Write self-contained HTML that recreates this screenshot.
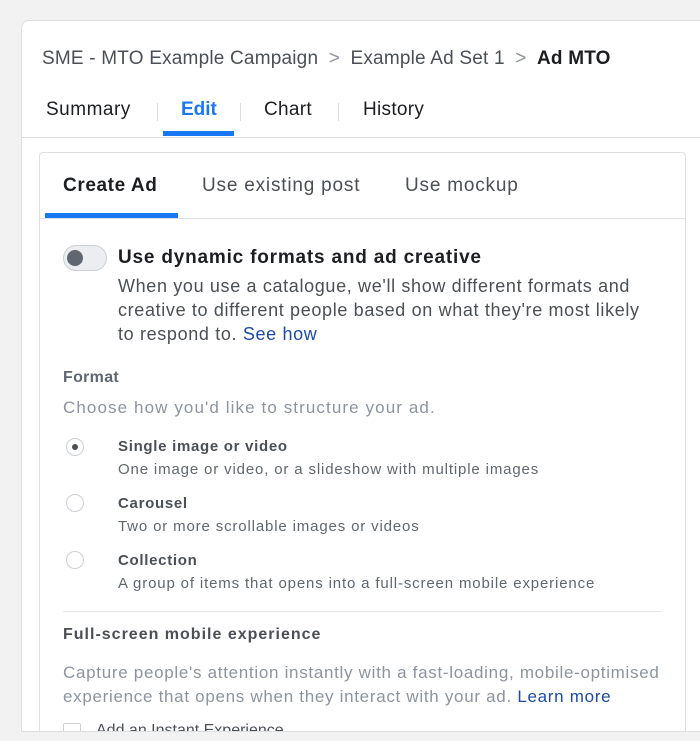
<!DOCTYPE html>
<html style="width:700px;height:741px;overflow:hidden"><head><style>
*{margin:0;padding:0;box-sizing:border-box}
body{width:700px;height:741px;background:#f2f2f2;font-family:"Liberation Sans",Arial,sans-serif;position:relative;overflow:hidden}
.a{position:absolute;white-space:nowrap}
</style></head><body>
<div class="a" style="left:21px;top:20px;width:679px;height:721px;background:#fff;border:1px solid #dddfe2;border-right:none;border-bottom:none;border-radius:8px 0 0 0"></div>
<div class="a" style="left:42px;top:48px;font-size:19px;color:#4b4f56;letter-spacing:0.2px">SME - MTO Example Campaign <span style="color:#8d949e;margin:0 5px">&gt;</span> Example Ad Set 1 <span style="color:#8d949e;margin:0 5px">&gt;</span> <b style="color:#1c1e21">Ad MTO</b></div>
<div class="a" style="left:46px;top:99px;font-size:19px;color:#1c1e21;letter-spacing:0.5px">Summary</div>
<div class="a" style="left:157px;top:103px;width:1px;height:18px;background:#dadde1"></div>
<div class="a" style="left:181px;top:99px;font-size:19px;color:#1877f2;font-weight:bold">Edit</div>
<div class="a" style="left:240px;top:103px;width:1px;height:18px;background:#dadde1"></div>
<div class="a" style="left:264px;top:99px;font-size:19px;color:#1c1e21;letter-spacing:0.3px">Chart</div>
<div class="a" style="left:338px;top:103px;width:1px;height:18px;background:#dadde1"></div>
<div class="a" style="left:363px;top:99px;font-size:19px;color:#1c1e21;letter-spacing:0.3px">History</div>
<div class="a" style="left:163px;top:131px;width:71px;height:5px;background:#1877f2"></div>
<div class="a" style="left:21px;top:137px;width:679px;height:1px;background:#dadde1"></div>
<div class="a" style="left:39px;top:152px;width:647px;height:589px;background:#fff;border:1px solid #dddfe2;border-bottom:none;border-radius:4px 4px 0 0"></div>
<div class="a" style="left:63px;top:175px;font-size:19px;color:#1c1e21;font-weight:bold;letter-spacing:0.6px">Create Ad</div>
<div class="a" style="left:202px;top:175px;font-size:19px;color:#4b4f56;letter-spacing:0.8px">Use existing post</div>
<div class="a" style="left:405px;top:175px;font-size:19px;color:#4b4f56;letter-spacing:0.8px">Use mockup</div>
<div class="a" style="left:45px;top:213px;width:133px;height:5px;background:#1877f2"></div>
<div class="a" style="left:40px;top:218px;width:645px;height:1px;background:#dadde1"></div>
<div class="a" style="left:63px;top:245px;width:44px;height:26px;border-radius:13px;background:#ebedf0;border:1px solid #ccd0d5"></div>
<div class="a" style="left:67px;top:250px;width:16px;height:16px;border-radius:8px;background:#606770"></div>
<div class="a" style="left:118px;top:247px;font-size:19px;color:#1c1e21;font-weight:bold;letter-spacing:0.8px">Use dynamic formats and ad creative</div>
<div class="a" style="left:118px;top:274px;font-size:18px;line-height:24px;color:#4b4f56;letter-spacing:0.65px">When you use a catalogue, we'll show different formats and<br>creative to different people based on what they're most likely<br>to respond to. <span style="color:#1d4aa3">See how</span></div>
<div class="a" style="left:63px;top:369px;font-size:16px;color:#606770;font-weight:bold;letter-spacing:0.3px">Format</div>
<div class="a" style="left:63px;top:398px;font-size:17px;color:#8d949e;letter-spacing:1.1px">Choose how you'd like to structure your ad.</div>
<div class="a" style="left:66px;top:438px;width:18px;height:18px;border-radius:9px;border:1px solid #ccd0d5;background:#fff"></div>
<div class="a" style="left:72px;top:444px;width:6px;height:6px;border-radius:3px;background:#4b4f56"></div>
<div class="a" style="left:66px;top:494px;width:18px;height:18px;border-radius:9px;border:1px solid #ccd0d5"></div>
<div class="a" style="left:66px;top:551px;width:18px;height:18px;border-radius:9px;border:1px solid #ccd0d5"></div>
<div class="a" style="left:118px;top:438px;font-size:15px;color:#4b4f56;font-weight:bold;letter-spacing:0.7px">Single image or video</div>
<div class="a" style="left:118px;top:461px;font-size:15px;color:#606770;letter-spacing:0.85px">One image or video, or a slideshow with multiple images</div>
<div class="a" style="left:118px;top:495px;font-size:15px;color:#4b4f56;font-weight:bold;letter-spacing:0.7px">Carousel</div>
<div class="a" style="left:118px;top:518px;font-size:15px;color:#606770;letter-spacing:0.85px">Two or more scrollable images or videos</div>
<div class="a" style="left:118px;top:552px;font-size:15px;color:#4b4f56;font-weight:bold;letter-spacing:0.7px">Collection</div>
<div class="a" style="left:118px;top:575px;font-size:15px;color:#606770;letter-spacing:0.85px">A group of items that opens into a full-screen mobile experience</div>
<div class="a" style="left:63px;top:611px;width:599px;height:1px;background:#e5e6e9"></div>
<div class="a" style="left:63px;top:626px;font-size:16px;color:#4b4f56;font-weight:bold;letter-spacing:1px">Full-screen mobile experience</div>
<div class="a" style="left:63px;top:661px;font-size:17px;line-height:24px;color:#8d949e;letter-spacing:0.7px">Capture people's attention instantly with a fast-loading, mobile-optimised<br>experience that opens when they interact with your ad. <span style="color:#1d4aa3">Learn more</span></div>
<div class="a" style="left:63px;top:723px;width:18px;height:8px;border:1px solid #ccd0d5;border-bottom:none;border-radius:2px 2px 0 0"></div>
<div class="a" style="left:96px;top:722px;height:9px;overflow:hidden;font-size:16px;color:#4b4f56">Add an Instant Experience</div>
<div class="a" style="left:21px;top:731px;width:679px;height:10px;background:#f2f2f2;border-top:1px solid #dddfe2"></div>
</body></html>
